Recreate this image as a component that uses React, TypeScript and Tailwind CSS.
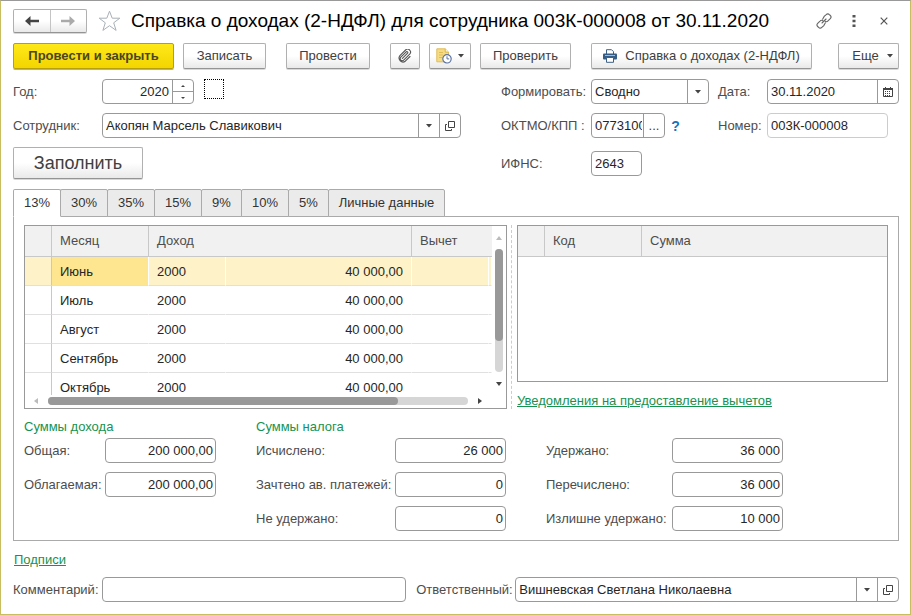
import React, { useState } from 'react';

interface IncomeRow {
  month: string;
  code: string;
  amount: string;
}

const TABS = [
  { title: '13%', width: 'w-12' },
  { title: '30%', width: 'w-12' },
  { title: '35%', width: 'w-12' },
  { title: '15%', width: 'w-12' },
  { title: '9%', width: 'w-[41px]' },
  { title: '10%', width: 'w-12' },
  { title: '5%', width: 'w-[41px]' },
  { title: 'Личные данные', width: 'w-[117px]' },
];

const INCOME: IncomeRow[] = [
  { month: 'Июнь', code: '2000', amount: '40 000,00' },
  { month: 'Июль', code: '2000', amount: '40 000,00' },
  { month: 'Август', code: '2000', amount: '40 000,00' },
  { month: 'Сентябрь', code: '2000', amount: '40 000,00' },
  { month: 'Октябрь', code: '2000', amount: '40 000,00' },
];

const buttonBase =
  'flex shrink-0 items-center justify-center rounded-xs border border-[#b0b0b0] border-b-[#949494] bg-linear-to-b from-white from-50% to-[#e9e9e9] text-[#404040] shadow-[0_1px_0_#d8d8d8]';
const boxBase = 'flex h-[25px] items-stretch overflow-hidden rounded-sm border border-[#999] bg-white';
const inputBase = 'w-full min-w-0 flex-1 bg-transparent px-[3px] text-[#262626] outline-none';
const boxButton = 'flex w-[21px] shrink-0 items-center justify-center border-l border-[#999] text-[#404040]';

const Caret = () => (
  <svg width="6" height="4" viewBox="0 0 6 4" fill="#444" aria-hidden="true">
    <path d="M0 0h6L3 3.4z" />
  </svg>
);

const OpenIcon = () => (
  <svg width="10" height="10" viewBox="0 0 10 10" fill="none" stroke="#444" aria-hidden="true">
    <path d="M3.5 .5h6v6h-6z" />
    <path d="M2 3.5H.5v6h6V8" />
  </svg>
);

const CalendarIcon = () => (
  <svg width="10" height="10" viewBox="0 0 10 10" aria-hidden="true">
    <path d="M.5 1.5h9v8h-9z" fill="#fff" stroke="#444" />
    <path d="M0 1h10v2H0zM2 0h1v1H2zM7 0h1v1H7z" fill="#444" />
    <path d="M2 4h1v1H2zM4 4h1v1H4zM6 4h1v1H6zM2 6h1v1H2zM4 6h1v1H4zM6 6h1v1H6zM2 8h1v1H2zM4 8h1v1H4zM6 8h1v1H6z" fill="#444" />
  </svg>
);

const ArrowIcon: React.FC<{ color: string; flip?: boolean }> = ({ color, flip }) => (
  <svg width="14" height="10" viewBox="0 0 14 10" className={flip ? 'rotate-180' : ''} aria-hidden="true">
    <path d="M0 5 5.500 0v3.800H14v2.400H5.500V10z" fill={color} />
  </svg>
);

const StarIcon = () => (
  <svg width="23" height="22" viewBox="0 0 23 22" fill="#fff" stroke="#a9b0b8" aria-hidden="true">
    <path d="M11.5 1.2l2.700 7h7.600l-6.100 4.600 2.400 7.600-6.600-4.700-6.600 4.700 2.400-7.600L1.200 8.200h7.600z" />
  </svg>
);

const LinkIcon = () => (
  <svg width="16" height="16" viewBox="0 0 16 16" fill="none" stroke="#666" strokeWidth="1.1" strokeLinecap="round" aria-hidden="true">
    <path d="M6.600 6.200 8.200 3.400 10.200 1.600a2.200 2.200 0 0 1 3.200 0l.9.900a2.200 2.200 0 0 1 0 3.100L12 7.900a2.200 2.200 0 0 1-3 .2" />
    <path d="M9.400 9.800 7.800 12.600 5.800 14.400a2.200 2.200 0 0 1-3.200 0l-.9-.9a2.200 2.200 0 0 1 0-3.100L4 8.100a2.200 2.200 0 0 1 3-.2" />
    <path d="M6 10l4-4" />
  </svg>
);

const ClipIcon = () => (
  <svg width="14" height="14" viewBox="0 0 14 14" fill="none" stroke="#555" strokeWidth="1.1" strokeLinecap="round" aria-hidden="true">
    <path d="M4.400 9.400 9.600 4.200a1 1 0 0 0-1.400-1.400L2.800 8.200a2 2 0 0 0 2.900 2.900L11.700 5.100a2.900 2.900 0 0 0-4.100-4.100L1.900 6.700a3.900 3.900 0 0 0 5.400 5.500L12 7.500" />
  </svg>
);

const DocClockIcon = () => (
  <svg width="16" height="16" viewBox="0 0 16 16" fill="none" aria-hidden="true">
    <path d="M.8 .8h8.400l3.300 3.300v9.700H.8z" fill="#f5dc83" stroke="#e0bd5c" />
    <path d="M9.200 .8v3.300h3.300" fill="#fff6cf" stroke="#d9b24a" />
    <path d="M3 4.500h4M3 7h4M3 9.500h3" stroke="#e0bd5c" />
    <circle cx="11" cy="10.800" r="4.200" fill="#fff" stroke="#5b73a3" strokeWidth="1.200" />
    <path d="M11 8.300v2.600h2.200" stroke="#5b73a3" />
  </svg>
);

const PrinterIcon = () => (
  <svg width="14" height="14" viewBox="0 0 14 14" aria-hidden="true">
    <path d="M3.500 5V.7h5L10.500 2.700V5" fill="#fff" stroke="#3c5f85" />
    <rect x="0" y="4.500" width="14" height="6" rx="1" fill="#345d87" />
    <path d="M2 6.500h10" stroke="#9db8d2" />
    <path d="M3.500 8.500h7v4.800h-7z" fill="#fff" stroke="#3c5f85" />
  </svg>
);

const Triangle: React.FC<{ d: string; fill: string }> = ({ d, fill }) => (
  <svg width="6" height="6" viewBox="0 0 6 6" fill={fill} aria-hidden="true">
    <path d={d} />
  </svg>
);

interface SumFieldProps {
  id: string;
  label: string;
  value: string;
  labelWidth: string;
}

const SumField: React.FC<SumFieldProps> = ({ id, label, value, labelWidth }) => (
  <div className="flex items-center">
    <label htmlFor={id} className={`${labelWidth} shrink-0 whitespace-nowrap`}>
      {label}
    </label>
    <div className={`${boxBase} w-[111px]`}>
      <input id={id} defaultValue={value} className="w-full min-w-0 bg-transparent px-[2px] text-right text-[#262626] outline-none" />
    </div>
  </div>
);

const TitleBar = () => (
  <header className="flex h-6 items-center">
    <div className="flex h-6 w-[74px] shrink-0 rounded-xs border border-[#b0b0b0] border-b-[#949494] bg-linear-to-b from-white from-50% to-[#e9e9e9] shadow-[0_1px_0_#d8d8d8]">
      <button aria-label="Назад" className="flex flex-1 items-center justify-center border-r border-[#c4c4c4]">
        <ArrowIcon color="#444" />
      </button>
      <button aria-label="Вперед" className="flex flex-1 items-center justify-center">
        <ArrowIcon color="#aaa" flip />
      </button>
    </div>
    <button aria-label="Добавить в избранное" className="ml-[11px] shrink-0">
      <StarIcon />
    </button>
    <h1 className="ml-[10px] flex-1 truncate text-[19px] leading-6 text-black">
      Справка о доходах (2-НДФЛ) для сотрудника 003К-000008 от 30.11.2020
    </h1>
    <div className="flex shrink-0 items-center pr-[11px]">
      <button aria-label="Получить ссылку">
        <LinkIcon />
      </button>
      <button aria-label="Меню" className="ml-5">
        <svg width="4" height="12" viewBox="0 0 4 12" fill="#555" aria-hidden="true">
          <path d="M.5 0h3v2.500h-3zM.5 4.700h3v2.500h-3zM.5 9.400h3v2.500h-3z" />
        </svg>
      </button>
      <button aria-label="Закрыть" className="ml-6">
        <svg width="8" height="8" viewBox="0 0 8 8" stroke="#555" strokeWidth="1.200" aria-hidden="true">
          <path d="M.7 .7l6.600 6.600M7.300 .7L.7 7.300" />
        </svg>
      </button>
    </div>
  </header>
);

const Toolbar = () => (
  <div className="mt-[10px] flex h-[26px]">
    <button className="flex w-[161px] shrink-0 items-center justify-center rounded-xs border border-[#b5a010] bg-linear-to-b from-[#ffe817] to-[#f3d500] font-bold text-[#4a4520] shadow-[0_1px_0_#c9b93c]">
      Провести и закрыть
    </button>
    <button className={`${buttonBase} ml-[9px] w-[83px]`}>Записать</button>
    <button className={`${buttonBase} ml-5 w-[84px]`}>Провести</button>
    <button aria-label="Присоединенные файлы" className={`${buttonBase} ml-5 w-[30px]`}>
      <ClipIcon />
    </button>
    <button aria-label="Создать на основании" className={`${buttonBase} ml-[9px] w-[42px] gap-[6px]`}>
      <DocClockIcon />
      <Caret />
    </button>
    <button className={`${buttonBase} ml-[9px] w-[91px]`}>Проверить</button>
    <button className={`${buttonBase} ml-5 w-[221px] gap-2`}>
      <PrinterIcon />
      Справка о доходах (2-НДФЛ)
    </button>
    <button className={`${buttonBase} ml-auto w-[61px] gap-2 pl-2`}>
      Еще
      <Caret />
    </button>
  </div>
);

const HeaderFields = () => (
  <div className="mt-[10px] flex gap-10">
    <div className="flex flex-1 flex-col gap-[9px]">
      <div className="flex items-center">
        <label htmlFor="year" className="w-[89px] shrink-0">Год:</label>
        <div className={`${boxBase} w-[92px]`}>
          <input id="year" defaultValue="2020" className={`${inputBase} text-right`} />
          <div className="flex w-[21px] shrink-0 flex-col border-l border-[#999]">
            <button aria-label="Больше" className="flex flex-1 items-center justify-center border-b border-[#999]">
              <svg width="4" height="2" viewBox="0 0 4 2" fill="#444" aria-hidden="true"><path d="M0 2h4L2 0z" /></svg>
            </button>
            <button aria-label="Меньше" className="flex flex-1 items-center justify-center">
              <svg width="4" height="2" viewBox="0 0 4 2" fill="#444" aria-hidden="true"><path d="M0 0h4L2 2z" /></svg>
            </button>
          </div>
        </div>
        <input
          type="checkbox"
          aria-label="Отметка"
          className="ml-[10px] size-5 appearance-none self-start border border-dotted border-black"
        />
      </div>
      <div className="flex items-center">
        <label htmlFor="employee" className="w-[89px] shrink-0">Сотрудник:</label>
        <div className={`${boxBase} flex-1`}>
          <input id="employee" defaultValue="Акопян Марсель Славикович" className={inputBase} />
          <button aria-label="Выбрать сотрудника" className={boxButton}><Caret /></button>
          <button aria-label="Открыть сотрудника" className={boxButton}><OpenIcon /></button>
        </div>
      </div>
      <button className={`${buttonBase} h-8 w-[130px] text-[18px]`}>Заполнить</button>
    </div>

    <div className="flex w-[398px] shrink-0 flex-col gap-[9px]">
      <div className="flex items-center">
        <label htmlFor="mode" className="w-[90px] shrink-0">Формировать:</label>
        <div className={`${boxBase} w-[118px]`}>
          <select id="mode" className={`${inputBase} appearance-none`}>
            <option>Сводно</option>
          </select>
          <span className={boxButton}><Caret /></span>
        </div>
        <label htmlFor="date" className="ml-[9px] w-[49px] shrink-0">Дата:</label>
        <div className={`${boxBase} flex-1`}>
          <input id="date" defaultValue="30.11.2020" className={inputBase} />
          <button aria-label="Календарь" className={boxButton}><CalendarIcon /></button>
        </div>
      </div>
      <div className="flex items-center">
        <label htmlFor="oktmo" className="w-[90px] shrink-0 whitespace-nowrap">ОКТМО/КПП :</label>
        <div className={`${boxBase} w-[74px]`}>
          <input id="oktmo" defaultValue="07731000" className={`${inputBase} mr-px pr-0`} />
          <button aria-label="Выбрать ОКТМО" className={boxButton}>...</button>
        </div>
        <button aria-label="Справка" className="w-[21px] text-center text-[14px] font-bold text-[#1a72b8]">?</button>
        <label htmlFor="number" className="ml-8 w-[49px] shrink-0">Номер:</label>
        <input
          id="number"
          readOnly
          defaultValue="003К-000008"
          className="h-[25px] w-[121px] rounded-sm border border-[#ccc] px-[3px] text-[#262626] outline-none"
        />
      </div>
      <div className="flex items-center pt-1">
        <label htmlFor="ifns" className="w-[90px] shrink-0">ИФНС:</label>
        <div className={`${boxBase} w-[51px]`}>
          <input id="ifns" defaultValue="2643" className={inputBase} />
        </div>
      </div>
    </div>
  </div>
);

const IncomeTable = () => {
  const [selected, setSelected] = useState(0);

  return (
    <div className="h-[184px] border border-[#999]">
      <div className="flex h-[169px]">
        <div className="flex-1 overflow-hidden">
          <table className="w-full table-fixed border-separate border-spacing-0 text-left">
            <colgroup>
              <col className="w-[27px]" />
              <col className="w-[97px]" />
              <col className="w-[77px]" />
              <col />
              <col className="w-[77px]" />
              <col className="w-[3px]" />
            </colgroup>
            <thead>
              <tr className="h-[31px] bg-[#f1f1f1] text-[#4d4d4d]">
                <th aria-label="Отметка" className="border-r border-b border-[#c8c8c8]" />
                <th className="border-r border-b border-[#c8c8c8] pl-2 font-normal">Месяц</th>
                <th colSpan={2} className="border-r border-b border-[#c8c8c8] pl-2 font-normal">Доход</th>
                <th colSpan={2} className="border-b border-[#c8c8c8] pl-2 font-normal">Вычет</th>
              </tr>
            </thead>
            <tbody>
              {INCOME.map((row, i) => {
                const active = i === selected;
                const tint = active ? 'bg-[#fdf2c8] border-r-white' : 'border-r-transparent';
                const cell = `h-[29px] border-r border-b border-b-[#e0e0e0] bg-clip-padding p-0 pt-px ${tint}`;
                return (
                  <tr key={row.month} onClick={() => setSelected(i)} className="text-[#262626]">
                    <td className={`h-[29px] border-r border-b border-r-[#c8c8c8] border-b-[#e0e0e0] p-0 ${active ? 'bg-[#fdf2c8]' : ''}`} />
                    <td
                      className={`h-[29px] border-r border-b border-b-[#e0e0e0] p-0 pt-px pl-2 ${
                        active ? 'border-r-white bg-[#fee58f]' : 'border-r-transparent'
                      }`}
                    >
                      {row.month}
                    </td>
                    <td className={`${cell} pl-2`}>{row.code}</td>
                    <td className={`${cell} pr-2 text-right`}>{row.amount}</td>
                    <td className={cell} />
                    <td className={cell} />
                  </tr>
                );
              })}
            </tbody>
          </table>
        </div>
        <div className="flex w-[14px] shrink-0 flex-col items-center pt-[9px] pb-2">
          <Triangle d="M0 5h6L3 1z" fill="#bbb" />
          <div className="mt-2 mb-[9px] w-2 flex-1 rounded-full bg-[#d6d6d6]">
            <div className="h-3/4 rounded-full bg-[#999]" />
          </div>
          <Triangle d="M0 1h6L3 5z" fill="#444" />
        </div>
      </div>
      <div className="flex h-3 items-center pr-[23px] pl-2">
        <Triangle d="M5 0v6L1 3z" fill="#bbb" />
        <div className="mr-[9px] ml-[9px] h-2 flex-1 rounded-full bg-[#d6d6d6]">
          <div className="h-2 w-5/6 rounded-full bg-[#999]" />
        </div>
        <Triangle d="M1 0v6l4-3z" fill="#444" />
      </div>
    </div>
  );
};

const DeductionTable = () => (
  <div>
    <div className="h-[157px] border border-[#999]">
      <table className="w-full table-fixed border-separate border-spacing-0 text-left">
        <thead>
          <tr className="h-[31px] bg-[#f1f1f1] text-[#4d4d4d]">
            <th aria-label="Отметка" className="w-[27px] border-r border-b border-[#c8c8c8]" />
            <th className="w-[97px] border-r border-b border-[#c8c8c8] pl-2 font-normal">Код</th>
            <th className="border-b border-[#c8c8c8] pl-2 font-normal">Сумма</th>
          </tr>
        </thead>
      </table>
    </div>
    <a href="#deductions" className="mt-[11px] inline-block whitespace-nowrap text-[#17924f] underline">
      Уведомления на предоставление вычетов
    </a>
  </div>
);

const App: React.FC = () => {
  const [activeTab, setActiveTab] = useState('13%');

  return (
    <main className="border border-[#c9bd62] border-t-[#999] bg-white pt-2 pr-[11px] pb-3 pl-3 font-['Liberation_Sans',Arial,sans-serif] text-[13px] leading-4 text-[#4d4d4d]">
      <TitleBar />
      <Toolbar />
      <HeaderFields />

      <div role="tablist" className="mt-[10px] flex h-7">
        {TABS.map((tab) => (
          <button
            key={tab.title}
            role="tab"
            aria-selected={tab.title === activeTab}
            onClick={() => setActiveTab(tab.title)}
            className={`${tab.width} -mr-px shrink-0 rounded-t-xs border border-[#aaa] text-[#333] ${
              tab.title === activeTab ? 'z-10 border-b-white bg-white' : 'bg-[#ebebeb]'
            }`}
          >
            {tab.title}
          </button>
        ))}
      </div>

      <section className="-mt-px border border-[#aaa] px-[10px] pt-2 pb-[9px]">
        <div className="grid grid-cols-[483fr_10px_371fr]">
          <IncomeTable />
          <div className="ml-1 border-l border-dashed border-[#ccc]" />
          <DeductionTable />
        </div>

        <div className="mt-[10px] flex gap-10">
          <div className="flex flex-col gap-[9px]">
            <h2 className="-mb-[6px] text-[#17924f]">Суммы дохода</h2>
            <SumField id="total" label="Общая:" value="200 000,00" labelWidth="w-[81px]" />
            <SumField id="taxable" label="Облагаемая:" value="200 000,00" labelWidth="w-[81px]" />
          </div>
          <div className="flex flex-col gap-[9px]">
            <h2 className="-mb-[6px] text-[#17924f]">Суммы налога</h2>
            <SumField id="calculated" label="Исчислено:" value="26 000" labelWidth="w-[139px]" />
            <SumField id="advance" label="Зачтено ав. платежей:" value="0" labelWidth="w-[139px]" />
            <SumField id="not-withheld" label="Не удержано:" value="0" labelWidth="w-[139px]" />
          </div>
          <div className="flex flex-col gap-[9px] self-end">
            <SumField id="withheld" label="Удержано:" value="36 000" labelWidth="w-[126px]" />
            <SumField id="transferred" label="Перечислено:" value="36 000" labelWidth="w-[126px]" />
            <SumField id="over-withheld" label="Излишне удержано:" value="10 000" labelWidth="w-[126px]" />
          </div>
        </div>
      </section>

      <a href="#signatures" className="mt-[11px] ml-px inline-block text-[#17924f] underline">
        Подписи
      </a>

      <div className="mt-[9px] flex items-center">
        <label htmlFor="comment" className="w-[89px] shrink-0">Комментарий:</label>
        <div className={`${boxBase} flex-[304]`}>
          <input id="comment" className={inputBase} />
        </div>
        <label htmlFor="responsible" className="ml-[10px] w-[99px] shrink-0">Ответственный:</label>
        <div className={`${boxBase} flex-[384]`}>
          <input id="responsible" defaultValue="Вишневская Светлана Николаевна" className={inputBase} />
          <button aria-label="Выбрать ответственного" className={boxButton}><Caret /></button>
          <button aria-label="Открыть ответственного" className={boxButton}><OpenIcon /></button>
        </div>
      </div>
    </main>
  );
};

export default App;
